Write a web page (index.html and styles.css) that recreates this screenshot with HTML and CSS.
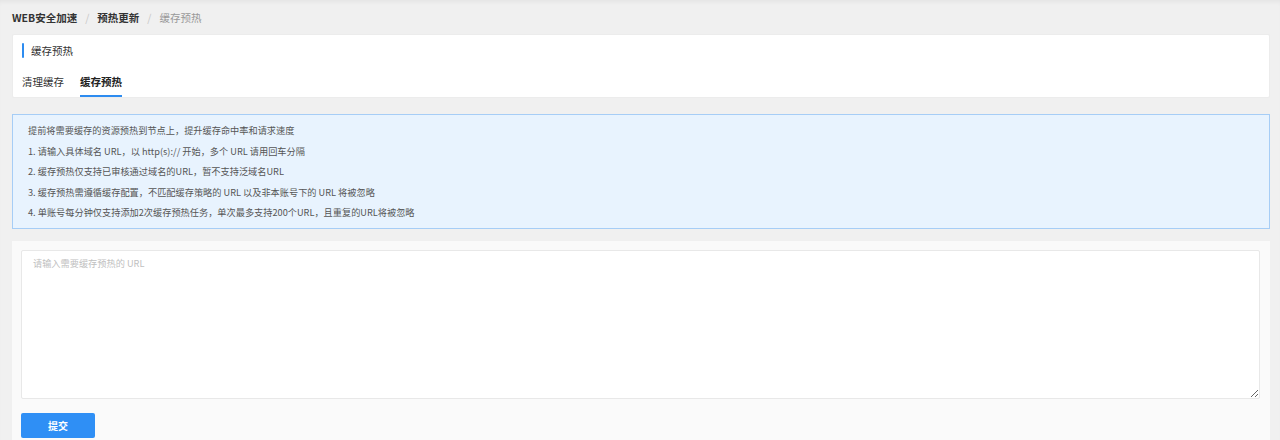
FILE: index.html
```html
<!DOCTYPE html>
<html lang="zh-CN">
<head>
<meta charset="utf-8">
<title>缓存预热</title>
<link rel="stylesheet" href="styles.css">
</head>
<body>
<div class="page">
  <nav class="crumbs">
    <span class="crumb strong">WEB安全加速</span>
    <span class="sep">/</span>
    <span class="crumb strong">预热更新</span>
    <span class="sep">/</span>
    <span class="crumb muted">缓存预热</span>
  </nav>

  <section class="card">
    <div class="card-title"><span class="bar"></span><span>缓存预热</span></div>
    <div class="tabs">
      <span class="tab">清理缓存</span>
      <span class="tab active">缓存预热</span>
    </div>
  </section>

  <section class="notice">
    <p>提前将需要缓存的资源预热到节点上，提升缓存命中率和请求速度</p>
    <p>1. 请输入具体域名 URL，以 http(s):// 开始，多个 URL 请用回车分隔</p>
    <p>2. 缓存预热仅支持已审核通过域名的URL，暂不支持泛域名URL</p>
    <p>3. 缓存预热需遵循缓存配置，不匹配缓存策略的 URL 以及非本账号下的 URL 将被忽略</p>
    <p>4. 单账号每分钟仅支持添加2次缓存预热任务，单次最多支持200个URL，且重复的URL将被忽略</p>
  </section>

  <section class="form">
    <textarea class="urls" placeholder="请输入需要缓存预热的 URL"></textarea>
    <button class="submit" type="button">提交</button>
  </section>
</div>
</body>
</html>
```

FILE: styles.css
```css
html, body {
  margin: 0;
  padding: 0;
  height: 100%;
}
body {
  background: #f0f0f0;
  font-family: "Noto Sans CJK SC", "Noto Sans", "Liberation Sans", sans-serif;
  color: #333;
  box-shadow: inset 0 4px 4px -2px rgba(0,0,0,0.05);
  overflow: hidden;
}
.page {
  padding: 0 10px 0 12px;
}
.crumbs {
  height: 34px;
  display: flex;
  align-items: center;
  gap: 8px;
  font-size: 10.5px;
}
.crumb.strong {
  font-weight: 700;
  color: #333;
}
.crumb.muted {
  color: #999;
}
.sep {
  color: #c8c8c8;
}
.card {
  background: #fff;
  border: 1px solid #ececec;
  border-radius: 2px;
  padding: 7px 9px 0 9px;
}
.card-title {
  display: flex;
  align-items: center;
  gap: 7px;
  height: 16px;
  font-size: 10.5px;
  color: #333;
}
.bar {
  width: 2px;
  height: 15px;
  background: #2d8cf0;
  border-radius: 1px;
}
.tabs {
  display: flex;
  gap: 16px;
  margin-top: 11px;
}
.tab {
  font-size: 10.5px;
  line-height: 26px;
  border-bottom: 2px solid transparent;
  color: #333;
}
.tab.active {
  font-weight: 700;
  color: #222;
  border-bottom-color: #2d8cf0;
}
.notice {
  margin-top: 16px;
  background: #e8f3fe;
  border: 1px solid #a6cdf6;
  padding: 5px 15px 5.5px;
  font-size: 9.2px;
  color: #555;
}
.notice p {
  margin: 0;
  line-height: 20.5px;
}
.form {
  margin-top: 12px;
  background: #fafafa;
  padding: 9px 10px 10px 9px;
  display: flex;
  flex-direction: column;
  align-items: flex-start;
  gap: 14px;
}
.urls {
  box-sizing: border-box;
  width: 100%;
  height: 149px;
  border: 1px solid #e8e8e8;
  border-radius: 2px;
  background: #fff;
  padding: 5px 11px;
  font-family: inherit;
  font-size: 9.2px;
  line-height: 14px;
  color: #333;
  outline: none;
  resize: vertical;
}
.urls::placeholder {
  color: #c0c0c0;
}
.submit {
  width: 74px;
  height: 25px;
  border: none;
  border-radius: 2px;
  background: #2f8ff5;
  color: #fff;
  font-family: inherit;
  font-size: 10px;
  font-weight: 700;
  padding: 0;
}
```
